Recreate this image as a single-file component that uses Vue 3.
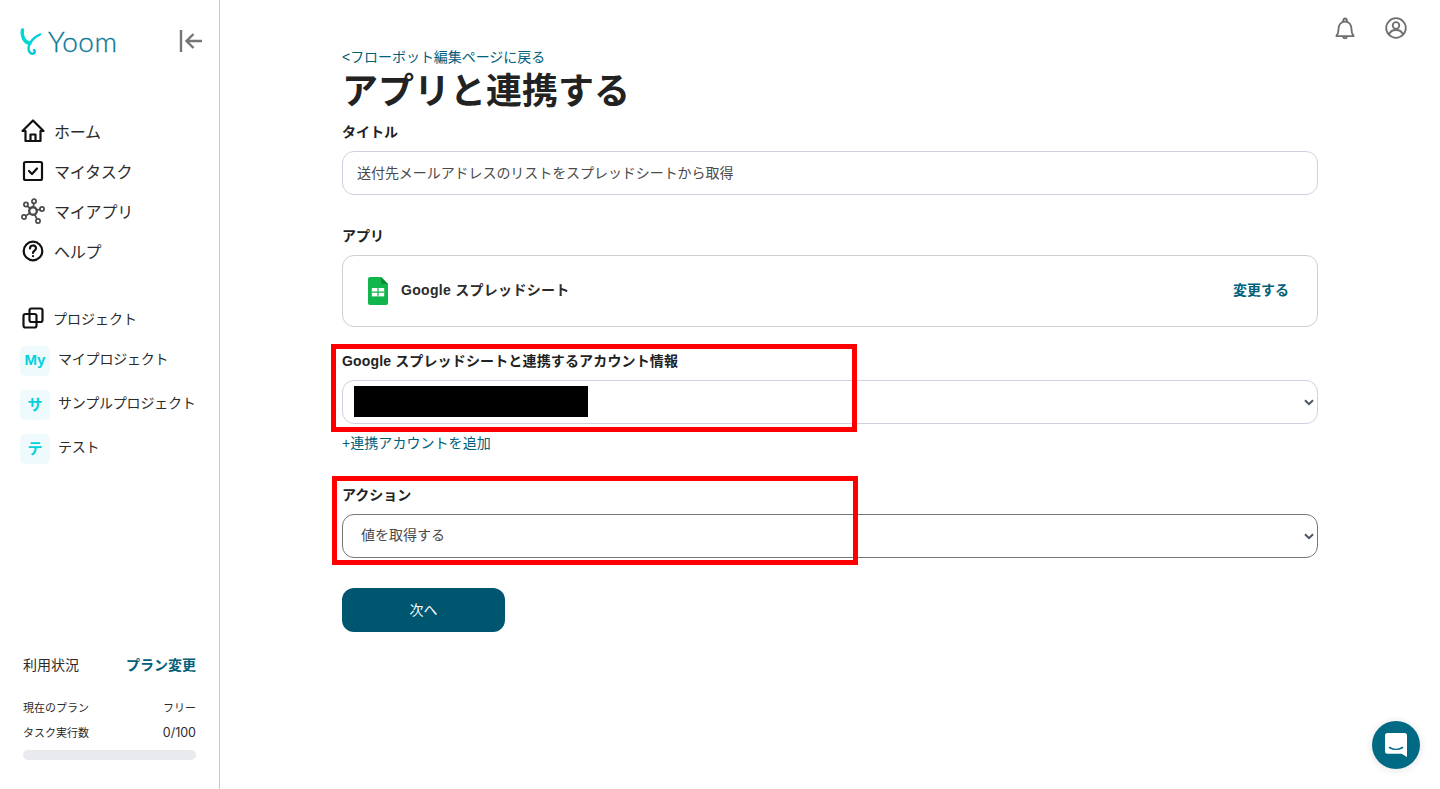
<script setup>
const navItems = [
  { label: 'ホーム', icon: 'home' },
  { label: 'マイタスク', icon: 'task' },
  { label: 'マイアプリ', icon: 'apps' },
  { label: 'ヘルプ', icon: 'help' },
]
const projects = [
  { badge: 'My', label: 'マイプロジェクト' },
  { badge: 'サ', label: 'サンプルプロジェクト' },
  { badge: 'テ', label: 'テスト' },
]
</script>

<template>
  <div class="page">
    <aside class="sidebar">
      <div class="brand">
        <svg class="logo-mark" width="24" height="30" viewBox="0 0 24 30" fill="none">
          <defs>
            <linearGradient id="lg" x1="0" y1="0" x2="1" y2="1">
              <stop offset="0" stop-color="#00dcd0" />
              <stop offset="1" stop-color="#00b8e0" />
            </linearGradient>
          </defs>
          <path d="M2.500 3C1.500 9 4 15.500 10 16.500" stroke="#00d8d2" stroke-width="3.400" stroke-linecap="round" />
          <path d="M20 7.500C15 9.500 9 15 8.500 20.500C8.200 25 11 27.500 13.500 26.500C15 26 15 24 14 23" stroke="url(#lg)" stroke-width="2.400" stroke-linecap="round" />
        </svg>
        <span class="logo-text">Yoom</span>
        <svg class="collapse" width="24" height="24" viewBox="0 0 24 24" fill="none" stroke="#757575" stroke-width="2.400">
          <path d="M2 1v22" />
          <path d="M23 12H8M14.500 5l-7 7 7 7" />
        </svg>
      </div>

      <nav class="nav">
        <a v-for="item in navItems" :key="item.label" class="nav-item">
          <svg class="nav-icon" width="26" height="26" viewBox="0 0 26 26" fill="none" stroke="#111" stroke-width="2.200" stroke-linejoin="round" stroke-linecap="round">
            <template v-if="item.icon === 'home'">
              <path d="M2.500 13 13 2.500 23.500 13H20.500V23H5.500V13Z" />
              <path d="M10.500 23V16.500H15.500V23" />
            </template>
            <template v-else-if="item.icon === 'task'">
              <rect x="4" y="4" width="18" height="18" rx="1.500" />
              <path d="M9 13l3 3 5-5.500" />
            </template>
            <template v-else-if="item.icon === 'apps'">
              <g stroke="#4a4a4a" stroke-width="1.700">
                <circle cx="13" cy="13" r="3.800" stroke-width="2.400" />
                <circle cx="14" cy="3.300" r="2.100" />
                <circle cx="22" cy="11" r="2.100" />
                <circle cx="6" cy="6.500" r="2.100" />
                <circle cx="4" cy="19" r="2.100" />
                <circle cx="18" cy="23" r="2.100" />
                <path d="M13.800 5.400l-.5 3.800M19.900 11.400l-3.100.9M7.300 8.100l3 2.400M5.800 17.900l4-2.800M17 21.100l-2.100-4.300" />
              </g>
            </template>
            <template v-else>
              <circle cx="13" cy="13" r="9.300" />
              <path d="M10 10.500c0-4 6-4 6-.2 0 2.400-3 2.400-3 4.700" />
              <path d="M13 18v.2" />
            </template>
          </svg>
          <span class="nav-label">{{ item.label }}</span>
        </a>
      </nav>

      <div class="project-head">
        <svg width="22" height="22" viewBox="0 0 22 22" fill="none" stroke="#111" stroke-width="2.200" stroke-linejoin="round">
          <rect x="1.500" y="7" width="13" height="13.500" rx="2" />
          <rect x="7.500" y="1.500" width="13" height="13.500" rx="2" />
        </svg>
        <span class="project-title">プロジェクト</span>
      </div>

      <div class="projects">
        <a v-for="p in projects" :key="p.label" class="project">
          <span class="badge">{{ p.badge }}</span>
          <span class="project-name">{{ p.label }}</span>
        </a>
      </div>

      <div class="usage">
        <div class="usage-top">
          <span>利用状況</span>
          <a class="plan-link">プラン変更</a>
        </div>
        <div class="usage-row first"><span>現在のプラン</span><span class="val">フリー</span></div>
        <div class="usage-row"><span>タスク実行数</span><span class="val num">0/100</span></div>
        <div class="bar"></div>
      </div>
    </aside>

    <main class="main">
      <header class="topbar">
        <svg width="22" height="24" viewBox="0 0 22 24" fill="none" stroke="#6f6f6f" stroke-width="1.800" stroke-linejoin="round">
          <path d="M2.500 19.500c1.600-1.500 2-3 2-6.500 0-4 2.400-7.500 6.500-7.500s6.500 3.500 6.500 7.500c0 3.500.4 5 2 6.500v.7H2.500Z" />
          <path d="M9 5.500C9 1.500 13 1.500 13 5.500" />
          <path d="M9 20.500c.4 2.500 3.600 2.500 4 0" />
        </svg>
        <svg class="user" width="22" height="22" viewBox="0 0 22 22" fill="none" stroke="#6f6f6f" stroke-width="1.800">
          <circle cx="11" cy="11" r="9.800" />
          <circle cx="11" cy="8.500" r="3.300" />
          <path d="M4.200 17.500c1.500-6 12.100-6 13.600 0" />
        </svg>
      </header>

      <div class="content">
        <a class="link back-link">&lt;フローボット編集ページに戻る</a>
        <h1>アプリと連携する</h1>

        <label class="label title-label">タイトル</label>
        <input class="control title-input" value="送付先メールアドレスのリストをスプレッドシートから取得" readonly />

        <label class="label app-label">アプリ</label>
        <div class="app-card">
          <svg width="20" height="28" viewBox="0 0 20 28">
            <path d="M2 0H13L20 7V26a2 2 0 0 1-2 2H2a2 2 0 0 1-2-2V2a2 2 0 0 1 2-2Z" fill="#10b54b" />
            <path d="M13 0L20 7H15a2 2 0 0 1-2-2Z" fill="#0b8a3a" />
            <path d="M3.800 11H16.200V19.400H3.800Z" fill="#fff" />
            <path d="M3.800 15.200H16.200M10 11V19.400" stroke="#10b54b" stroke-width="1.200" />
          </svg>
          <span class="app-name">Google スプレッドシート</span>
          <a class="change">変更する</a>
        </div>

        <label class="label account-label">Google スプレッドシートと連携するアカウント情報</label>
        <div class="select-wrap">
          <select class="control select"><option></option></select>
          <svg class="chevron" width="10" height="7" viewBox="0 0 10 7" fill="none" stroke="#4b5563" stroke-width="2"><path d="M1 1.200l4 4 4-4" /></svg>
          <span class="redact"></span>
        </div>
        <a class="link add-link">+連携アカウントを追加</a>

        <label class="label action-label">アクション</label>
        <div class="select-wrap">
          <select class="control select dark"><option>値を取得する</option></select>
          <svg class="chevron" width="10" height="7" viewBox="0 0 10 7" fill="none" stroke="#4b5563" stroke-width="2"><path d="M1 1.200l4 4 4-4" /></svg>
        </div>

        <button class="next">次へ</button>

        <span class="mark mark-a"></span>
        <span class="mark mark-b"></span>
      </div>

      <button class="chat" aria-label="chat">
        <svg width="24" height="26" viewBox="0 0 24 26">
          <path d="M3.500 1H20.500a2.500 2.500 0 0 1 2.500 2.500V25l-5.500-3.300H3.500a2.500 2.500 0 0 1-2.500-2.500V3.500a2.500 2.500 0 0 1 2.500-2.500Z" fill="#fff" />
          <path d="M5.500 15.500c3.800 2.400 9.200 2.400 13 0" fill="none" stroke="#006a85" stroke-width="1.500" stroke-linecap="round" />
        </svg>
      </button>
    </main>
  </div>
</template>

<style>
html, body { margin: 0; height: 100%; background: #fff; overflow: hidden; }
</style>

<style scoped>
* { box-sizing: border-box; }
.page {
  display: flex;
  height: 789px;
  overflow: hidden;
  font-family: "Liberation Sans", "Noto Sans CJK JP", sans-serif;
  color: #2b2b2b;
  background: #fff;
}
.sidebar {
  width: 220px;
  flex: none;
  border-right: 1px solid #c9c9c9;
  display: flex;
  flex-direction: column;
  padding-left: 20px;
}
.brand {
  display: flex;
  align-items: center;
  height: 30px;
  margin-top: 27px;
}
.logo-mark { flex: none; }
.logo-text {
  font-family: Lato, sans-serif;
  font-weight: 300;
  font-size: 28px;
  line-height: 28px;
  width: 71px;
  margin-left: 4px;
  letter-spacing: 0.5px;
  color: #087a97;
  margin-bottom: 3px;
  -webkit-text-stroke: 0.3px #087a97;
}
.collapse { margin-left: 60px; flex: none; margin-bottom: 2px; }
.nav {
  margin-top: 54px;
  display: flex;
  flex-direction: column;
}
.nav-item {
  display: flex;
  align-items: center;
  height: 40px;
  font-size: 16px;
  color: #2b2b2b;
}
.nav-icon { flex: none; margin-right: 8px; }
.nav-label { letter-spacing: -0.2px; }
.project-head {
  display: flex;
  align-items: center;
  gap: 9px;
  height: 24px;
  margin-top: 35px;
  padding-left: 2px;
  font-size: 14px;
}
.projects {
  margin-top: 16px;
  display: flex;
  flex-direction: column;
  gap: 14px;
}
.project {
  display: flex;
  align-items: center;
  height: 30px;
}
.badge {
  width: 30px;
  height: 30px;
  flex: none;
  border-radius: 5px;
  background: #effafc;
  color: #00d2dc;
  font-weight: 700;
  font-size: 15px;
  display: flex;
  align-items: center;
  justify-content: center;
  padding-bottom: 3px;
}
.project-name {
  margin-left: 8px;
  font-size: 14px;
  line-height: 20px;
  margin-bottom: 4px;
  letter-spacing: -0.2px;
  white-space: nowrap;
}
.usage {
  margin-top: auto;
  margin-left: 3px;
  margin-right: 23px;
  padding-bottom: 29px;
}
.usage-top {
  display: flex;
  justify-content: space-between;
  font-size: 14px;
  line-height: 20px;
  padding-bottom: 1px;
}
.plan-link { font-weight: 700; color: #006079; }
.usage-row {
  display: flex;
  justify-content: space-between;
  align-items: center;
  height: 25px;
  font-size: 11px;
  padding-bottom: 1px;
}
.usage-row.first { margin-top: 19px; }
.val { font-size: 11px; }
.num { font-family: Inter, sans-serif; font-size: 12.500px; }
.bar {
  height: 10px;
  margin-top: 5px;
  border-radius: 5px;
  background: #e8eaee;
}
.main {
  flex: 1;
  min-width: 0;
  position: relative;
}
.topbar {
  display: flex;
  justify-content: flex-end;
  align-items: center;
  gap: 29px;
  height: 47px;
  padding: 9px 33px 0 0;
}
.content {
  position: relative;
  width: 976px;
  margin-left: 122px;
  display: flex;
  flex-direction: column;
  align-items: flex-start;
}
.link {
  font-size: 14px;
  line-height: 20px;
  color: #00607a;
}
.back-link { letter-spacing: -0.05px; }
h1 {
  margin: 0;
  padding-top: 2px;
  font-size: 36px;
  line-height: 46px;
  font-weight: 700;
  color: #222;
  white-space: nowrap;
}
.label {
  font-size: 14px;
  line-height: 20px;
  font-weight: 700;
  color: #222;
}
.title-label { margin-top: 7px; margin-bottom: 9px; }
.app-label { margin-top: 31px; margin-bottom: 9px; }
.account-label { margin-top: 24px; margin-bottom: 9px; letter-spacing: 0.15px; }
.action-label { margin-top: 32px; margin-bottom: 9px; }
.control {
  width: 976px;
  height: 44px;
  border: 1px solid #cdd2de;
  border-radius: 12px;
  padding: 0 14px 2px;
  background: #fff;
  font: inherit;
  font-size: 14px;
  color: #4a4a4a;
  outline: none;
  display: block;
}
.title-input { letter-spacing: -0.06px; }
.app-card {
  width: 976px;
  height: 72px;
  border: 1px solid #cfcfcf;
  border-radius: 12px;
  display: flex;
  align-items: center;
  padding: 0 28px 0 25px;
}
.app-name {
  margin-left: 13px;
  margin-bottom: 5px;
  font-size: 14px;
  font-weight: 700;
  letter-spacing: 0.3px;
  color: #2b2b2b;
}
.change { margin-left: auto; margin-bottom: 5px; font-size: 14px; font-weight: 700; color: #006079; }
.select-wrap { position: relative; width: 976px; }
.select { appearance: none; -webkit-appearance: none; padding-left: 18px; }
.select.dark { border-color: #767676; }
.chevron { position: absolute; right: 4px; top: 19px; }
.redact {
  position: absolute;
  left: 12px;
  top: 6px;
  width: 234px;
  height: 31px;
  background: #000;
}
.add-link { margin-top: 9px; letter-spacing: 0.05px; }
.next {
  margin-top: 30px;
  width: 163px;
  height: 44px;
  border: none;
  border-radius: 12px;
  background: #00566f;
  color: #fff;
  font: inherit;
  font-size: 14px;
  padding: 0 0 2px;
}
.mark {
  position: absolute;
  border: 5px solid #ff0000;
  pointer-events: none;
}
.mark-a { left: -11px; top: 297px; width: 526px; height: 88px; }
.mark-b { left: -10px; top: 429px; width: 526px; height: 89px; }
.chat {
  position: absolute;
  left: 1152px;
  top: 721px;
  width: 48px;
  height: 48px;
  border: none;
  border-radius: 50%;
  padding: 0;
  background: #006a85;
  box-shadow: 0 1px 8px rgba(0,0,0,.12);
  display: flex;
  align-items: center;
  justify-content: center;
}
</style>
